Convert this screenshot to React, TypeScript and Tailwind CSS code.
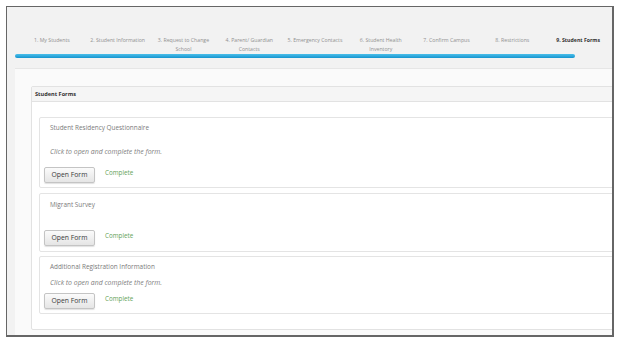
import React from 'react';

const steps: { label: React.ReactNode; active?: boolean }[] = [
  { label: '1. My Students' },
  { label: '2. Student Information' },
  { label: <>3. Request to Change<br />School</> },
  { label: <>4. Parent/ Guardian<br />Contacts</> },
  { label: '5. Emergency Contacts' },
  { label: <>6. Student Health<br />Inventory</> },
  { label: '7. Confirm Campus' },
  { label: '8. Restrictions' },
  { label: '9. Student Forms', active: true },
];

interface FormCardProps {
  title: string;
  desc?: string;
  padTop: string;
  descGap?: string;
  btnGap: string;
  padBottom: string;
}

function FormCard({ title, desc, padTop, descGap, btnGap, padBottom }: FormCardProps) {
  return (
    <div className={`border border-[#e4e4e4] bg-white rounded-[2px] ${padTop} ${padBottom}`}>
      <div className="pl-[10px] text-[6.4px] leading-[10px] text-[#7a7a7a] whitespace-nowrap">{title}</div>
      {desc && (
        <div className={`pl-[10px] ${descGap} text-[6.9px] leading-[10px] italic text-[#808080] whitespace-nowrap`}>
          {desc}
        </div>
      )}
      <div className={`flex items-start pl-[4px] ${btnGap}`}>
        <button className="h-[16px] w-[51px] rounded-[2px] border border-[#c4c4c4] bg-gradient-to-b from-[#fbfbfb] to-[#e5e5e5] text-[6.8px] leading-none text-[#3a3a3a] shadow-[0_1px_1px_rgba(0,0,0,0.12)]">
          Open Form
        </button>
        <span className="ml-[10px] mt-[1.5px] text-[6.3px] leading-[8px] text-[#66a35a]">Complete</span>
      </div>
    </div>
  );
}

export default function App() {
  return (
    <div className="w-[624px] h-[342px] bg-white pt-[6px] pl-[6px] font-['Open_Sans',sans-serif]">
      <div className="w-[608px] h-[331px] border-l border-t border-r-2 border-b-2 border-[#666] bg-[#f2f2f2] overflow-hidden flex flex-col">
        {/* wizard steps */}
        <div className="grid grid-cols-9 pl-[12px] pr-[1px] pt-[29px] h-[76px] shrink-0">
          {steps.map((s, i) => (
            <div
              key={i}
              className={`text-center text-[5.2px] leading-[9px] whitespace-nowrap ${
                s.active ? 'font-bold text-[#333]' : 'text-[#919191]'
              }`}
            >
              {s.label}
            </div>
          ))}
        </div>
        <div className="ml-[8px] -mt-[29px] w-[560px] h-[4px] rounded-full bg-gradient-to-b from-[#48bfea] to-[#1195cf] shrink-0" />

        {/* content */}
        <div className="ml-[8px] mt-[10px] flex-1 border-t border-[#e6e6e6] bg-[#fafafa]">
          <div className="ml-[16px] mt-[17px] w-[640px] border border-[#e2e2e2] rounded-[2px] bg-white">
            <div className="h-[15px] flex items-center pl-[3px] border-b border-[#e2e2e2] bg-[#f5f5f5] text-[5.6px] font-bold text-[#333]">
              Student Forms
            </div>
            <div className="pl-[7px] pt-[15px] pb-[15px] flex flex-col">
              <FormCard
                title="Student Residency Questionnaire"
                desc="Click to open and complete the form."
                padTop="pt-[5px]"
                descGap="mt-[14px]"
                btnGap="mt-[10px]"
                padBottom="pb-[4px]"
              />
              <div className="h-[5px]" />
              <FormCard title="Migrant Survey" padTop="pt-[6px]" btnGap="mt-[20px]" padBottom="pb-[5px]" />
              <div className="h-[4px]" />
              <FormCard
                title="Additional Registration Information"
                desc="Click to open and complete the form."
                padTop="pt-[5px]"
                descGap="mt-[6px]"
                btnGap="mt-[5px]"
                padBottom="pb-[4px]"
              />
            </div>
          </div>
        </div>
      </div>
    </div>
  );
}
